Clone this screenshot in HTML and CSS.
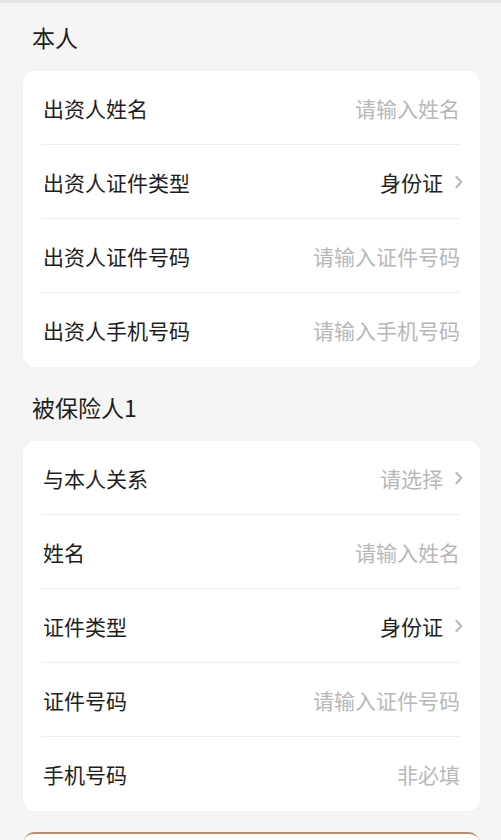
FILE: index.html
```html
<!DOCTYPE html>
<html lang="zh-CN">
<head>
<meta charset="utf-8">
<title>表单</title>
<link rel="stylesheet" href="styles.css">
</head>
<body>
<div class="page">
  <div class="section-title">本人</div>
  <div class="card">
    <div class="row"><span class="label">出资人姓名</span><span class="value placeholder">请输入姓名</span></div>
    <div class="row"><span class="label">出资人证件类型</span><span class="value">身份证<svg class="chev" viewBox="0 0 8 14"><path d="M1.6 2 L6.2 7 L1.6 12" fill="none" stroke="#bdbdbd" stroke-width="2.4" stroke-linecap="round" stroke-linejoin="round"/></svg></span></div>
    <div class="row"><span class="label">出资人证件号码</span><span class="value placeholder">请输入证件号码</span></div>
    <div class="row"><span class="label">出资人手机号码</span><span class="value placeholder">请输入手机号码</span></div>
  </div>
  <div class="section-title second">被保险人1</div>
  <div class="card">
    <div class="row"><span class="label">与本人关系</span><span class="value placeholder">请选择<svg class="chev" viewBox="0 0 8 14"><path d="M1.6 2 L6.2 7 L1.6 12" fill="none" stroke="#bdbdbd" stroke-width="2.4" stroke-linecap="round" stroke-linejoin="round"/></svg></span></div>
    <div class="row"><span class="label">姓名</span><span class="value placeholder">请输入姓名</span></div>
    <div class="row"><span class="label">证件类型</span><span class="value">身份证<svg class="chev" viewBox="0 0 8 14"><path d="M1.6 2 L6.2 7 L1.6 12" fill="none" stroke="#bdbdbd" stroke-width="2.4" stroke-linecap="round" stroke-linejoin="round"/></svg></span></div>
    <div class="row"><span class="label">证件号码</span><span class="value placeholder">请输入证件号码</span></div>
    <div class="row"><span class="label">手机号码</span><span class="value placeholder">非必填</span></div>
  </div>
  <div class="button"></div>
</div>
</body>
</html>
```

FILE: styles.css
```css
html, body {
  margin: 0;
  padding: 0;
  background: #f5f5f5;
}
body {
  font-family: "Noto Sans CJK SC", "Noto Sans", sans-serif;
  color: #1e1e1e;
  overflow: hidden;
}
.page {
  border-top: 3px solid #e6e6e6;
  height: 837px;
  overflow: hidden;
}
.section-title {
  height: 68px;
  display: flex;
  align-items: center;
  padding-left: 32px;
  font-size: 23px;
  color: #1e1e1e;
}
.section-title.second {
  margin-top: 6px;
}
.card {
  margin: 0 21px 0 23px;
  background: #fff;
  border-radius: 12px;
  padding: 0 20px 0 18px;
  box-shadow: 0 0 3px rgba(0, 0, 0, 0.03);
}
.row {
  height: 74px;
  box-sizing: border-box;
  display: flex;
  align-items: center;
  justify-content: space-between;
  border-bottom: 1px solid #eeeeee;
  font-size: 21px;
}
.row:last-child {
  border-bottom: none;
}
.label {
  padding-left: 2px;
  color: #1e1e1e;
}
.value {
  display: flex;
  align-items: center;
  color: #222;
}
.placeholder {
  color: #b8b8b8;
}
.chev {
  width: 8px;
  height: 14px;
  margin-left: 12px;
  margin-right: -3px;
}
.button {
  margin: 21px 22px 0 24px;
  height: 40px;
  border-top: 2px solid #c48a68;
  border-radius: 10px 10px 0 0;
  background: #fff;
}
```
